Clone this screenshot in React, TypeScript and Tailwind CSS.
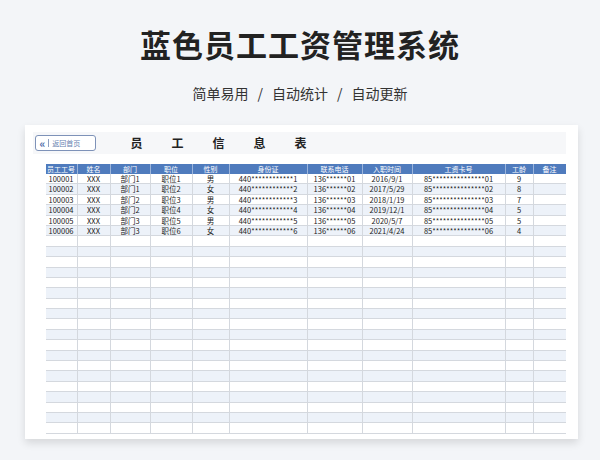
const cols = [32, 33, 40, 42, 37, 78, 55, 50, 93, 28, 32];
const heads = ["员工工号","姓名","部门","职位","性别","身份证","联系电话","入职时间","工资卡号","工龄","备注"];
const data = [
 ["100001","XXX","部门1","职位1","男","440************1","136******01","2016/9/1","85***************01","9",""],
 ["100002","XXX","部门1","职位2","女","440************2","136******02","2017/5/29","85***************02","8",""],
 ["100003","XXX","部门2","职位3","男","440************3","136******03","2018/1/19","85***************03","7",""],
 ["100004","XXX","部门2","职位4","女","440************4","136******04","2019/12/1","85***************04","5",""],
 ["100005","XXX","部门3","职位5","男","440************5","136******05","2020/5/7","85***************05","5",""],
 ["100006","XXX","部门3","职位6","女","440************6","136******06","2021/4/24","85***************06","4",""],
];
const rows = [...data, ...Array.from({length: 19}, () => Array(11).fill(""))];
export default function App() {
  const f = { fontFamily: '"Noto Sans CJK SC", "Noto Sans", sans-serif' };
  return (
    <div className="w-[600px] h-[460px] bg-[#f3f5f8] flex flex-col items-center" style={f}>
      <div className="mt-[22px] text-[31px] font-bold text-[#222] leading-[44px] tracking-[1px]">蓝色员工工资管理系统</div>
      <div className="mt-[17px] text-[14px] text-[#333] leading-[20px] flex gap-[9px]">
        <span>简单易用</span><span>/</span><span>自动统计</span><span>/</span><span>自动更新</span>
      </div>
      <div className="mt-[22px] w-[553px] h-[314px] bg-white shadow-[0_4px_8px_rgba(0,0,0,0.12)] ml-[2px] flex flex-col">
        <div className="mt-[7px] ml-[8px] w-[533px] h-[22px] bg-[#f6f7f9] flex items-center">
          <div className="ml-[2px] w-[61px] h-[16px] rounded-[3px] border border-[#7e92b8] bg-white flex items-center">
            <span className="ml-[4px] text-[#4a6aa8] text-[11px] leading-none font-bold">«</span>
            <span className="mx-[3px] w-px h-[8px] bg-[#8ea0c2]"></span>
            <span className="text-[7px] text-[#6680b0]">返回首页</span>
          </div>
          <div className="ml-[35px] flex gap-[29px] text-[12px] font-bold text-[#222]">
            <span>员</span><span>工</span><span>信</span><span>息</span><span>表</span>
          </div>
        </div>
        <div className="ml-[21px] mt-[10px] w-[520px] flex flex-col">
          <div className="flex h-[10px] bg-[#4f7bbd] text-white text-[7px] leading-[10px]">
            {heads.map((h, i) => <div key={i} className="text-center border-r border-[#9bb4db] last:border-r-0" style={{ width: cols[i] }}>{h}</div>)}
          </div>
          {rows.map((r, ri) => (
            <div key={ri} className={`flex h-[10.4px] border-b border-[#d4d8de] text-[7.5px] leading-[10px] text-[#222] ${ri % 2 ? "bg-[#edf2f9]" : "bg-white"}`}>
              {r.map((c, i) => <div key={i} className="text-center border-r border-[#d4d8de] last:border-r-0 whitespace-nowrap overflow-hidden" style={{ width: cols[i] }}>{c}</div>)}
            </div>
          ))}
        </div>
      </div>
    </div>
  );
}
